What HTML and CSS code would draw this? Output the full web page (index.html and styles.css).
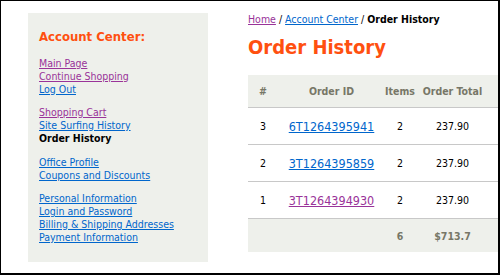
FILE: index.html
```html
<!DOCTYPE html>
<html lang="en">

<head>
    <meta charset="UTF-8" />
    <title>Order History</title>
    <link rel="stylesheet" href="styles.css">
</head>

<body>
    <div class="frame">
        <aside class="sidebar">
            <h2>Account Center:</h2>
            <ul class="nav-group">
                <li><a class="seen" href="#">Main Page</a></li>
                <li><a class="seen" href="#">Continue Shopping</a></li>
                <li><a href="#">Log Out</a></li>
            </ul>
            <ul class="nav-group">
                <li><a class="seen" href="#">Shopping Cart</a></li>
                <li><a href="#">Site Surfing History</a></li>
                <li class="current">Order History</li>
            </ul>
            <ul class="nav-group">
                <li><a href="#">Office Profile</a></li>
                <li><a href="#">Coupons and Discounts</a></li>
            </ul>
            <ul class="nav-group">
                <li><a href="#">Personal Information</a></li>
                <li><a href="#">Login and Password</a></li>
                <li><a href="#">Billing &amp; Shipping Addresses</a></li>
                <li><a href="#">Payment Information</a></li>
            </ul>
        </aside>

        <main class="content">
            <div class="crumbs">
                <a class="seen" href="#">Home</a> / <a href="#">Account Center</a> / <b>Order History</b>
            </div>
            <h1>Order History</h1>
            <table class="orders">
                <colgroup>
                    <col class="c-num">
                    <col class="c-id">
                    <col class="c-items">
                    <col class="c-total">
                    <col>
                </colgroup>
                <thead>
                    <tr>
                        <th>#</th>
                        <th>Order ID</th>
                        <th>Items</th>
                        <th>Order Total</th>
                        <th></th>
                    </tr>
                </thead>
                <tbody>
                    <tr>
                        <td>3</td>
                        <td><a class="order-link" href="#">6T1264395941</a></td>
                        <td>2</td>
                        <td>237.90</td>
                        <td></td>
                    </tr>
                    <tr>
                        <td>2</td>
                        <td><a class="order-link" href="#">3T1264395859</a></td>
                        <td>2</td>
                        <td>237.90</td>
                        <td></td>
                    </tr>
                    <tr>
                        <td>1</td>
                        <td><a class="order-link seen" href="#">3T1264394930</a></td>
                        <td>2</td>
                        <td>237.90</td>
                        <td></td>
                    </tr>
                </tbody>
                <tfoot>
                    <tr>
                        <td></td>
                        <td></td>
                        <td>6</td>
                        <td>$713.7</td>
                        <td></td>
                    </tr>
                </tfoot>
            </table>
        </main>
    </div>
</body>

</html>
```

FILE: styles.css
```css
body {
    margin: 0;
    font-family: "DejaVu Sans Condensed", "DejaVu Sans", sans-serif;
    font-stretch: condensed;
    font-size: 10.5px;
    color: #000;
    background: #fff;
}

a {
    color: #0066cc;
}

a.seen {
    color: #993399;
}

.frame {
    width: 500px;
    height: 275px;
    box-sizing: border-box;
    border: solid #000;
    border-width: 1px 2px 2px 1px;
    padding: 12px 0 0 27px;
    display: flex;
    align-items: flex-start;
    overflow: hidden;
}

.sidebar {
    flex: none;
    width: 180px;
    height: 249px;
    box-sizing: border-box;
    padding: 16px 11px;
    background: #eef0eb;
}

.sidebar h2 {
    margin: 0 0 11.5px;
    font-size: 13px;
    line-height: 16px;
    color: #ff5010;
}

.nav-group {
    list-style: none;
    margin: 0;
    padding: 0;
    line-height: 13px;
}

.nav-group + .nav-group {
    margin-top: 10.5px;
}

.nav-group .current {
    font-weight: bold;
}

.content {
    flex: 1;
    min-width: 0;
    margin-left: 40px;
}

.crumbs {
    line-height: 13px;
}

.content h1 {
    margin: 8.5px 0 16.5px;
    font-size: 20px;
    line-height: 24px;
    color: #ff5010;
}

.orders {
    width: 100%;
    border-collapse: collapse;
    table-layout: fixed;
}

.c-num {
    width: 30px;
}

.c-id {
    width: 107px;
}

.c-items {
    width: 30px;
}

.c-total {
    width: 75px;
}

.orders th,
.orders td {
    padding: 0;
    text-align: center;
    vertical-align: middle;
    white-space: nowrap;
}

.orders thead th {
    height: 32px;
    background: #eef0eb;
    color: #777767;
    border-bottom: 1px solid #c8c8c8;
}

.orders tbody td {
    height: 36px;
    border-bottom: 1px solid #c8c8c8;
}

.order-link {
    font-size: 12.5px;
}

.orders tfoot td {
    height: 33px;
    background: #eef0eb;
    color: #777767;
    font-weight: bold;
}
```
